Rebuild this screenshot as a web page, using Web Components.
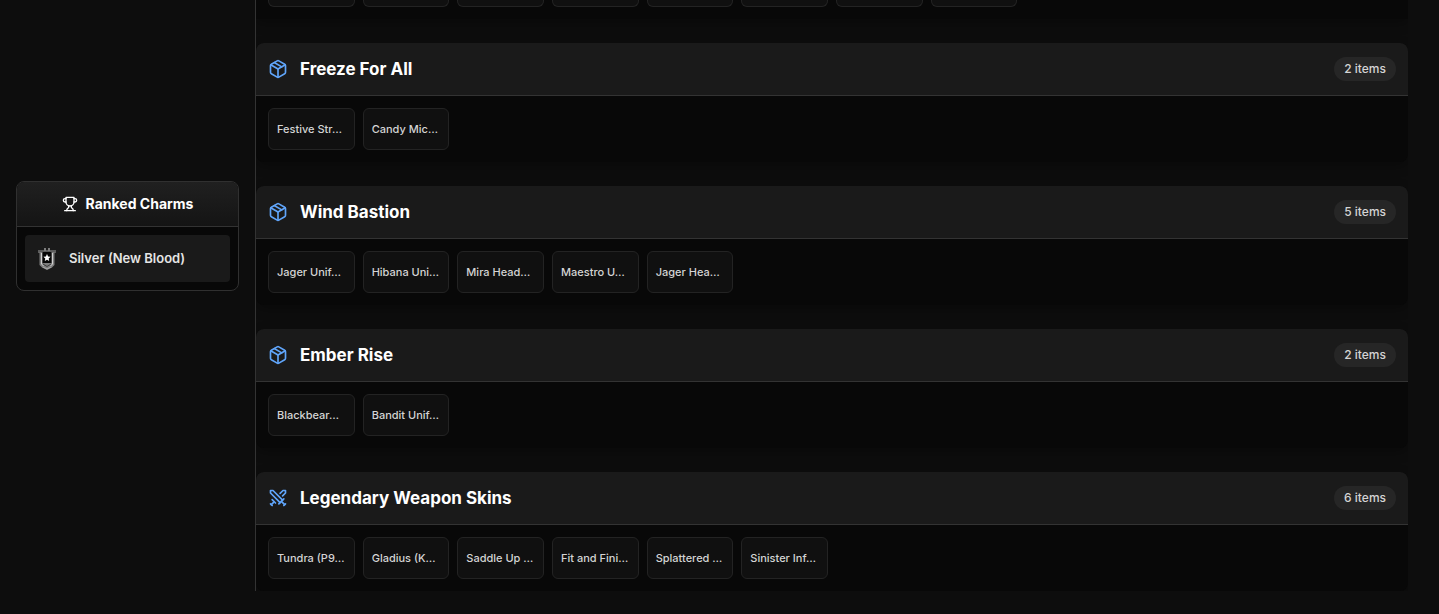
<!DOCTYPE html>
<html lang="en">
<head>
<meta charset="utf-8">
<title>Inventory</title>
<style>
body { margin: 0; background: #0d0d0d; color: #fff; font-family: Inter, "Liberation Sans", sans-serif; }
</style>
</head>
<body>
<inventory-page>
  <rank-panel slot="side" heading="Ranked Charms">
    <rank-charm>Silver (New Blood)</rank-charm>
  </rank-panel>
  <item-section tail>
    <item-card></item-card><item-card></item-card><item-card></item-card><item-card></item-card>
    <item-card></item-card><item-card></item-card><item-card></item-card><item-card></item-card>
  </item-section>
  <item-section heading="Freeze For All" icon="package" count="2 items">
    <item-card>Festive Str…</item-card><item-card>Candy Mic…</item-card>
  </item-section>
  <item-section heading="Wind Bastion" icon="package" count="5 items">
    <item-card>Jager Unif…</item-card><item-card>Hibana Uni…</item-card><item-card>Mira Head…</item-card><item-card>Maestro U…</item-card><item-card>Jager Hea…</item-card>
  </item-section>
  <item-section heading="Ember Rise" icon="package" count="2 items">
    <item-card>Blackbear…</item-card><item-card>Bandit Unif…</item-card>
  </item-section>
  <item-section heading="Legendary Weapon Skins" icon="swords" count="6 items">
    <item-card>Tundra (P9…</item-card><item-card>Gladius (K…</item-card><item-card>Saddle Up …</item-card><item-card>Fit and Fini…</item-card><item-card>Splattered …</item-card><item-card>Sinister Inf…</item-card>
  </item-section>
</inventory-page>
<script>
const ICONS = {
  package: '<path d="m7.5 4.27 9 5.15"/><path d="M21 8a2 2 0 0 0-1-1.73l-7-4a2 2 0 0 0-2 0l-7 4A2 2 0 0 0 3 8v8a2 2 0 0 0 1 1.73l7 4a2 2 0 0 0 2 0l7-4A2 2 0 0 0 21 16Z"/><path d="m3.3 7 8.7 5 8.7-5"/><path d="M12 22V12"/>',
  swords: '<path d="M14.5 17.5 3 6V3h3l11.5 11.5"/><path d="m13 19 6-6"/><path d="m16 16 4 4"/><path d="m19 21 2-2"/><path d="M14.5 6.5 18 3h3v3l-3.500 3.500"/><path d="m5 14 4 4"/><path d="m7 17-3 3"/><path d="m3 19 2 2"/>',
  trophy: '<path d="M6 9H4.500a2.500 2.500 0 0 1 0-5H6"/><path d="M18 9h1.500a2.500 2.500 0 0 0 0-5H18"/><path d="M4 22h16"/><path d="M10 14.660V17c0 .55-.47.98-.97 1.210C7.850 18.750 7 20.240 7 22"/><path d="M14 14.660V17c0 .55.47.98.97 1.210C16.150 18.750 17 20.240 17 22"/><path d="M18 2H6v7a6 6 0 0 0 12 0V2Z"/>'
};
const svg = (name, size) => `<svg width="${size}" height="${size}" viewBox="0 0 24 24" fill="none" stroke="currentColor" stroke-width="2" stroke-linecap="round" stroke-linejoin="round" aria-hidden="true">${ICONS[name] || ''}</svg>`;

class Base extends HTMLElement {
  connectedCallback() {
    if (!this.shadowRoot) this.attachShadow({ mode: 'open' }).innerHTML = this.render();
  }
}

customElements.define('inventory-page', class extends Base {
  render() {
    return `<style>
      :host { display: grid; grid-template-columns: 223px minmax(0, 1fr); gap: 16px; padding: 0 31px 23px 16px; align-items: start; }
      aside { padding-top: 181px; }
      main { display: flex; flex-direction: column; gap: 24px; border-left: 1px solid #333; overflow: hidden; }
    </style>
    <aside><slot name="side"></slot></aside>
    <main><slot></slot></main>`;
  }
});

customElements.define('rank-panel', class extends Base {
  render() {
    return `<style>
      :host { display: block; border: 1px solid #303030; border-radius: 8px; overflow: hidden; background: #080808; }
      h2 { display: flex; align-items: center; justify-content: center; gap: 8px; margin: 0; padding: 12px; font-size: 14px; line-height: 20px; font-weight: 700; border-bottom: 1px solid #333; background: linear-gradient(#202020, #141414); }
      ul { display: flex; flex-direction: column; margin: 0; padding: 8px; list-style: none; }
    </style>
    <h2>${svg('trophy', 16)}<span>${this.getAttribute('heading')}</span></h2>
    <ul><slot></slot></ul>`;
  }
});

customElements.define('rank-charm', class extends Base {
  render() {
    return `<style>
      :host { display: block; }
      li { display: flex; align-items: center; gap: 12px; height: 47px; padding: 0 12px; box-sizing: border-box; background: #1a1a1a; border-radius: 4px; list-style: none; font-size: 13px; line-height: 20px; font-weight: 600; color: #e5e5e5; }
      svg { flex: none; }
      span { padding-bottom: 2px; }
    </style>
    <li><svg width="20" height="24" viewBox="0 0 20 24" aria-hidden="true">
      <path d="M1 3h18v3H1z" fill="#5c5c5c"/><path d="M7 1h2v3H7zM11 1h2v3h-2z" fill="#7c7c7c"/>
      <path d="M2.500 5h15v13l-2.500 2.500-5 2.500-5-2.500L2.500 18z" fill="#7d7d7d"/>
      <path d="M4.500 6v11l2 2M15.500 6v11l-2 2" stroke="#cfcfcf" fill="none"/>
      <path d="M5.500 5h9v11h-9z" fill="#060606"/>
      <path d="M10 7l1.100 2.400 2.500.3-1.900 1.800.5 2.600-2.200-1.300-2.200 1.300.5-2.600-1.900-1.800 2.500-.3z" fill="#fff"/>
      <path d="M6 17l4 2.500 4-2.500" stroke="#3c3c3c" fill="none"/><path d="M6 20l4 2 4-2" stroke="#aaa" fill="none"/>
    </svg><span><slot></slot></span></li>`;
  }
});

customElements.define('item-section', class extends Base {
  render() {
    const tail = this.hasAttribute('tail');
    const header = tail ? '' : `<header>${svg(this.getAttribute('icon'), 20)}<h2>${this.getAttribute('heading')}</h2><span class="count">${this.getAttribute('count')}</span></header>`;
    return `<style>
      :host { display: block; border-radius: 8px; background: #080808; box-shadow: 0 4px 12px rgba(0, 0, 0, .3); }
      :host([tail]) { border-radius: 0; }
      :host([tail]) .grid { padding-top: 0; }
      :host([tail]) ::slotted(item-card) { height: 7px; border-top: 0; border-radius: 0 0 6px 6px; }
      header { display: flex; align-items: center; gap: 12px; padding: 12px; border-bottom: 1px solid #333; border-radius: 8px 8px 0 0; background: #1a1a1a; }
      svg { flex: none; color: #60a5fa; }
      h2 { flex: 1; margin: 0; font-size: 17px; line-height: 28px; font-weight: 700; }
      .count { padding: 2px 10px; border-radius: 12px; background: #262626; font-size: 12px; line-height: 20px; font-weight: 500; color: #d4d4d4; }
      .grid { display: grid; grid-template-columns: repeat(12, minmax(0, 1fr)); gap: 8px; padding: 12px; }
    </style>
    ${header}<div class="grid"><slot></slot></div>`;
  }
});

customElements.define('item-card', class extends Base {
  render() {
    return `<style>
      :host { display: block; box-sizing: border-box; height: 42px; padding: 0 8px; border: 1px solid #232323; border-radius: 6px; background: #101010; font-size: 11px; line-height: 40px; font-weight: 500; color: #d4d4d4; white-space: nowrap; overflow: hidden; }
    </style><slot></slot>`;
  }
});
</script>
</body>
</html>
